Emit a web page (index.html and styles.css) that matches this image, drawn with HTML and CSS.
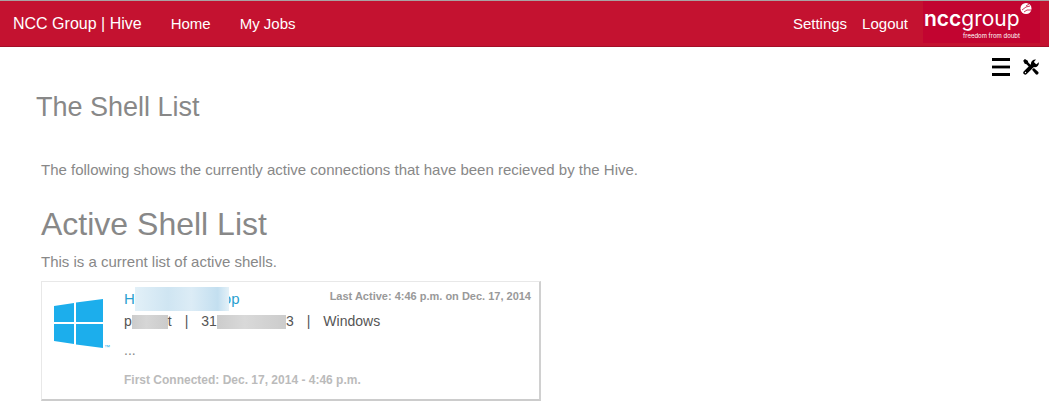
FILE: index.html
```html
<!DOCTYPE html>
<html lang="en">
<head>
<meta charset="utf-8">
<title>NCC Group | Hive</title>
<link rel="stylesheet" href="styles.css">
</head>
<body>
<header class="topbar">
  <nav class="nav">
    <a class="brand" href="#">NCC Group | Hive</a>
    <a href="#">Home</a>
    <a href="#">My Jobs</a>
  </nav>
  <nav class="nav nav-user">
    <a href="#">Settings</a>
    <a href="#">Logout</a>
    <svg class="logo" viewBox="0 0 117 42" role="img" aria-label="nccgroup">
      <text class="logo-name" x="1" y="25"><tspan class="logo-bold">ncc</tspan>group</text>
      <text class="logo-tag" x="40" y="37">freedom from doubt</text>
      <circle cx="103" cy="7.500" r="5.500" fill="#fff"/>
      <path d="M99 9l4-3 4-1M101 11l3-2 4 0M103 5l3-2" fill="none" stroke="#c20430" stroke-width=".8"/>
    </svg>
  </nav>
</header>
<main class="page">
  <div class="tools">
    <button type="button" aria-label="Menu">
      <svg width="18" height="18" viewBox="0 0 18 18"><path d="M0 0h18v3H0zM0 8h18v2H0zM0 15h18v3H0z"/><path d="M0 7h18v1H0zM0 10h18v1H0z" fill="#999"/></svg>
    </button>
    <button type="button" aria-label="Tools">
      <svg width="16" height="16" viewBox="0 0 16 16">
        <path d="M2.300 13.700L10.500 5.500" fill="none" stroke="#000" stroke-width="4" stroke-linecap="round"/>
        <path d="M8 5.500C7.500 2.500 10 .2 13 .5L11 2.800L11.600 4.600L13.500 5.200L15.800 3.200C16.200 6.700 13.600 8.700 10.500 8z"/>
        <path d="M.2 1.800L1.900.1L4.800 1.700L5.300 3.500L8 6.200L6.200 8L3.500 5.300L1.700 4.800zM9 10.800L10.900 8.900L15.300 12.900C16.300 14.500 14.400 16.400 12.800 15.300z"/>
        <circle cx="2.500" cy="13.500" r=".7" fill="#fff"/>
      </svg>
    </button>
  </div>
  <h1 class="page-title">The Shell List</h1>
  <section class="content">
    <p>The following shows the currently active connections that have been recieved by the Hive.</p>
    <h2 class="section-title">Active Shell List</h2>
    <p>This is a current list of active shells.</p>
    <article class="card">
      <svg class="os-icon" width="58" height="52" viewBox="0 0 58 52" role="img" aria-label="Windows">
        <path d="M0 8L20 5V24H0zM22 4.500L49 1V24H22zM0 26H20V46L0 43zM22 26H49V50L22 46.500z" fill="#1caeec"/>
        <text class="tm" x="50" y="51">™</text>
      </svg>
      <div class="details">
        <div class="card-head">
          <a class="host" href="#">H<span class="mask mask-host"></span>op</a>
          <span class="last-active">Last Active: 4:46 p.m. on Dec. 17, 2014</span>
        </div>
        <div class="meta">
          <span>p<span class="mask mask-user"></span>t</span>
          <span>|</span>
          <span>31<span class="mask mask-id"></span>3</span>
          <span>|</span>
          <span>Windows</span>
        </div>
        <p class="note">...</p>
        <p class="first-connected">First Connected: Dec. 17, 2014 - 4:46 p.m.</p>
      </div>
    </article>
  </section>
</main>
</body>
</html>
```
FILE: styles.css
```css
* { box-sizing: border-box; }
body {
  margin: 0;
  background: #fff;
  color: #888;
  font: 15px/20px "Liberation Sans", Arial, sans-serif;
}
h1, h2, p { margin: 0; font-weight: normal; }
a { text-decoration: none; }
.topbar {
  display: flex;
  justify-content: space-between;
  height: 47px;
  padding: 0 9px 0 13px;
  background: #c41230;
  border-top: 1px solid #a9a3a3;
  border-bottom: 1px solid #a30f28;
}
.nav { display: flex; align-items: center; gap: 29px; }
.nav a { color: #fff; }
.nav .brand { font-size: 16px; }
.nav-user { gap: 15px; }
.logo { width: 117px; height: 42px; align-self: flex-start; background: #c20430; }
.logo text { fill: #fff; }
.logo-name { font: 21px Inter, sans-serif; }
.logo-name .logo-bold { font-weight: 600; }
.logo-tag { font: 6px Inter, sans-serif; }
.page { padding: 11px 10px 14px 36px; }
.tools { display: flex; justify-content: flex-end; align-items: center; gap: 13px; height: 18px; }
.tools button { display: flex; padding: 0; border: 0; background: none; color: #000; }
.page-title { margin-top: 15px; font-size: 27px; line-height: 32px; }
.content { padding: 37px 0 0 5px; }
.section-title { margin: 24px 0 8px; font-size: 32px; line-height: 40px; }
.card {
  display: flex;
  gap: 12px;
  max-width: 500px;
  margin-top: 9px;
  padding: 7px 8px 9px 12px;
  border: 1px solid #e8e8e8;
  border-right: 2px solid #d0d0d0;
  border-bottom: 2px solid #ccc;
}
.os-icon { flex: none; margin-top: 9px; }
.tm { font: 6px "Liberation Sans", sans-serif; fill: #1caeec; }
.details { flex: 1; }
.card-head { display: flex; justify-content: space-between; }
.host { display: flex; align-items: center; color: #2a9fd0; }
.last-active { font-size: 11px; line-height: 14px; font-weight: bold; color: #999; }
.meta { display: flex; gap: 13px; margin-top: 2px; color: #555; font-size: 14px; }
.mask { display: inline-block; vertical-align: middle; }
.mask-host {
  z-index: 1;
  width: 94px;
  height: 24px;
  margin: -4px -6px -4px 0;
  background: linear-gradient(90deg, #e2f0f8, #cfe5f2 35%, #dcecf6 60%, #c3dff0 88%, #e4f1f8);
}
.mask-user { width: 36px; height: 14px; background: linear-gradient(90deg, #ccc, #d6d6d6 40%, #cbcbcb); }
.mask-id { width: 69px; height: 14px; background: linear-gradient(90deg, #ccc, #d9d9d9 40%, #ccc); }
.note { margin-top: 9px; font-size: 14px; }
.first-connected { margin-top: 10px; font-size: 12px; font-weight: bold; color: #bbb; }
```
